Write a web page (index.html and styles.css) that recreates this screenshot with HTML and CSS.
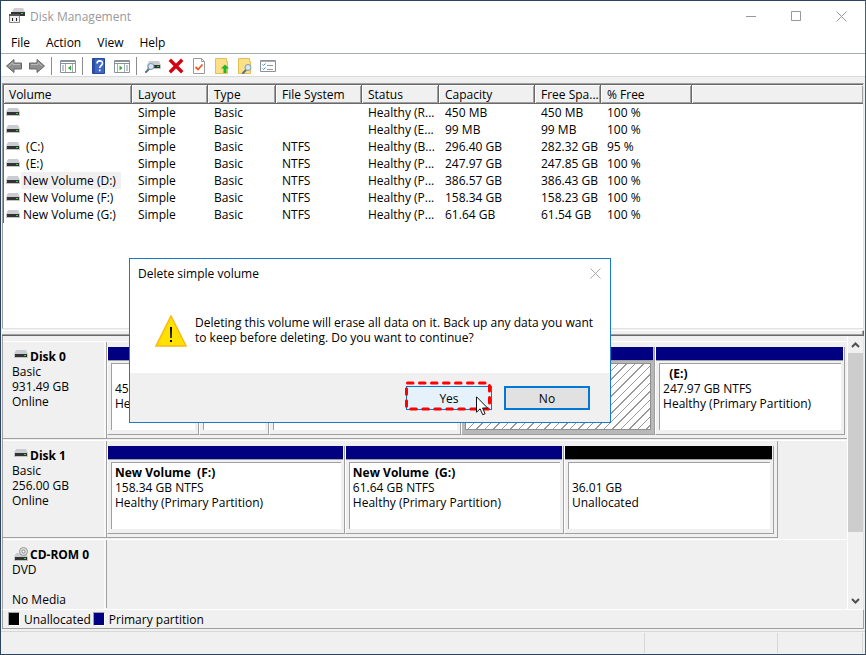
FILE: index.html
```html
<!DOCTYPE html>
<html lang="en">
<head>
    <meta charset="UTF-8">
    <meta name="viewport" content="width=device-width, initial-scale=1.0">
    <title>Disk Management</title>
    <link rel="stylesheet" href="styles.css">
</head>
<body>
    <!-- shared icons -->
    <svg class="sprite" aria-hidden="true">
        <symbol id="drive" viewBox="0 0 14 8">
            <path d="M2 0h10l2 4H0z" fill="#c9cdd1"/>
            <path d="M0 4h14v4H0z" fill="#c4c4c4"/>
            <path d="M1 4h12v3H1z" fill="#333"/>
            <path d="M10 5h2v1h-2z" fill="#2be02b"/>
        </symbol>
        <symbol id="arrow" viewBox="0 0 16 16">
            <path d="M.5 8 8 1.500V5h7.500v6H8v3.500z" fill="#8f8f8f" stroke="#666"/>
            <path d="M3 8l4-3.500V6.500h7" fill="none" stroke="#bbb"/>
        </symbol>
        <symbol id="glass" viewBox="0 0 10 10">
            <path d="M4 6 1 9" stroke="#5b6f83" stroke-width="2" stroke-linecap="round"/>
            <circle cx="6" cy="3.500" r="3" fill="#d3e7f7" stroke="#8096ab"/>
        </symbol>
    </svg>

    <div class="window">
        <header class="titlebar">
            <svg class="app-icon" width="16" height="16" viewBox="0 0 16 16">
                <path d="M5 0h9l2 4H3z" fill="#d0d0d0"/>
                <path d="M2 4h14v4H2z" fill="#333"/>
                <path d="M12 5h2v1h-2z" fill="#2be02b"/>
                <path d="M.5 7.500h10v7H.5z" fill="#eee" stroke="#888"/>
                <path d="M0 6h11v2H0z" fill="#555"/>
                <path d="M3 10h1v3H3zM7 10h1v3H7z" fill="#222"/>
            </svg>
            <h1>Disk Management</h1>
            <div class="window-buttons">
                <button type="button" aria-label="Minimize"><svg width="11" height="11"><path d="M0 5.500h10" stroke="#999"/></svg></button>
                <button type="button" aria-label="Maximize"><svg width="11" height="11"><path d="M.5.5h9v9h-9z" fill="none" stroke="#999"/></svg></button>
                <button type="button" aria-label="Close"><svg width="11" height="11"><path d="M.5.5l10 10M10.500.5l-10 10" stroke="#999"/></svg></button>
            </div>
        </header>

        <nav class="menu">
            <button type="button">File</button>
            <button type="button">Action</button>
            <button type="button">View</button>
            <button type="button">Help</button>
        </nav>

        <div class="toolbar">
            <button type="button" aria-label="Back"><svg width="16" height="16"><use href="#arrow"/></svg></button>
            <button type="button" aria-label="Forward"><svg width="16" height="16"><use href="#arrow" transform="matrix(-1 0 0 1 16 0)"/></svg></button>
            <span class="separator"></span>
            <button type="button" aria-label="Show console tree">
                <svg width="16" height="16" viewBox="0 0 16 16">
                    <path d="M.5 2.500h15v12H.5z" fill="#fff" stroke="#8b919b"/>
                    <path d="M1 3h14v1H1zM1 5h14v1H1z" fill="#8b919b"/>
                    <path d="M5.500 6v8M12.500 6v8" stroke="#a7adb5"/>
                    <path d="M2 8h2M2 10h2M2 12h2" stroke="#7f8fa8"/>
                    <path d="M11 7.500v5L8 10z" fill="#2eae2e"/>
                </svg>
            </button>
            <span class="separator"></span>
            <button type="button" aria-label="Help">
                <svg width="14" height="16" viewBox="0 0 14 16">
                    <path d="M.5.5h12v15H.5z" fill="#3f66c4" stroke="#27479a"/>
                    <path d="M1 1h2v14H1z" fill="#2b4fa8"/>
                    <path d="M5 5.500C5 2 10.500 2 10.500 5.200 10.500 7.500 7.700 7.600 7.700 10M7.700 11.500v1.800" fill="none" stroke="#fff" stroke-width="1.600"/>
                </svg>
            </button>
            <button type="button" aria-label="Show action pane">
                <svg width="16" height="16" viewBox="0 0 16 16">
                    <path d="M.5 2.500h15v12H.5z" fill="#fff" stroke="#8b919b"/>
                    <path d="M1 3h14v1H1zM1 5h14v1H1z" fill="#8b919b"/>
                    <path d="M3.500 6v8M10.500 6v8" stroke="#a7adb5"/>
                    <path d="M12 8h2M12 10h2M12 12h2" stroke="#7f8fa8"/>
                    <path d="M5.500 7.500v5l3-2.500z" fill="#2eae2e"/>
                </svg>
            </button>
            <span class="separator"></span>
            <button type="button" aria-label="Rescan disks">
                <svg width="16" height="16" viewBox="0 0 16 16">
                    <use href="#drive" x="2" y="3" width="14" height="8"/>
                    <use href="#glass" x="0" y="5" width="10" height="10"/>
                </svg>
            </button>
            <button type="button" aria-label="Delete volume">
                <svg width="16" height="16" viewBox="0 0 16 16">
                    <path d="M3 3l10 10M13 3L3 13" stroke="#d40012" stroke-width="3.400" stroke-linecap="square"/>
                </svg>
            </button>
            <button type="button" aria-label="Properties">
                <svg width="16" height="16" viewBox="0 0 16 16">
                    <path d="M2.500.5h8l3 3v12h-11z" fill="#fff" stroke="#9a9a9a"/>
                    <path d="M10.500.5v3h3" fill="none" stroke="#9a9a9a"/>
                    <path d="M4.500 9l2.500 2.500 4.500-5" fill="none" stroke="#ee5a24" stroke-width="1.800"/>
                </svg>
            </button>
            <button type="button" aria-label="Open folder">
                <svg width="16" height="16" viewBox="0 0 16 16">
                    <path d="M1.500.5h11v3h1v12h-12z" fill="#fbe08a" stroke="#e3bf56"/>
                    <path d="M11 6.500l4 4h-2.500V15h-3v-4.500H7z" fill="#22b422"/>
                </svg>
            </button>
            <button type="button" aria-label="Search folder">
                <svg width="16" height="16" viewBox="0 0 16 16">
                    <path d="M1.500.5h11v3h1v12h-12z" fill="#fbe08a" stroke="#e3bf56"/>
                    <use href="#glass" x="5" y="6" width="10" height="10"/>
                </svg>
            </button>
            <button type="button" aria-label="Options">
                <svg width="16" height="16" viewBox="0 0 16 16">
                    <path d="M.5 2.500h15v11H.5z" fill="#fff" stroke="#8b919b"/>
                    <path d="M1 3h14v1H1z" fill="#a9afb7"/>
                    <path d="M2.500 6.500l1 1 2-2M2.500 10.500l1 1 2-2" fill="none" stroke="#3c8be0"/>
                    <path d="M7 7.500h6M7 11.500h6" stroke="#999"/>
                </svg>
            </button>
        </div>

        <main class="content">
            <section class="volume-list">
                <table>
                    <colgroup>
                        <col class="col-volume">
                        <col class="col-layout">
                        <col class="col-type">
                        <col class="col-fs">
                        <col class="col-status">
                        <col class="col-capacity">
                        <col class="col-space">
                        <col class="col-free">
                        <col>
                    </colgroup>
                    <thead>
                        <tr><th>Volume</th><th>Layout</th><th>Type</th><th>File System</th><th>Status</th><th>Capacity</th><th>Free Spa...</th><th>% Free</th><th></th></tr>
                    </thead>
                    <tbody>
                        <tr><td><svg class="drive"><use href="#drive"/></svg></td><td>Simple</td><td>Basic</td><td></td><td>Healthy (R...</td><td>450 MB</td><td>450 MB</td><td>100 %</td><td></td></tr>
                        <tr><td><svg class="drive"><use href="#drive"/></svg></td><td>Simple</td><td>Basic</td><td></td><td>Healthy (E...</td><td>99 MB</td><td>99 MB</td><td>100 %</td><td></td></tr>
                        <tr><td><svg class="drive"><use href="#drive"/></svg><span class="name">&nbsp;(C:)</span></td><td>Simple</td><td>Basic</td><td>NTFS</td><td>Healthy (B...</td><td>296.40 GB</td><td>282.32 GB</td><td>95 %</td><td></td></tr>
                        <tr><td><svg class="drive"><use href="#drive"/></svg><span class="name">&nbsp;(E:)</span></td><td>Simple</td><td>Basic</td><td>NTFS</td><td>Healthy (P...</td><td>247.97 GB</td><td>247.85 GB</td><td>100 %</td><td></td></tr>
                        <tr><td><svg class="drive"><use href="#drive"/></svg><span class="name selected">New Volume (D:)</span></td><td>Simple</td><td>Basic</td><td>NTFS</td><td>Healthy (P...</td><td>386.57 GB</td><td>386.43 GB</td><td>100 %</td><td></td></tr>
                        <tr><td><svg class="drive"><use href="#drive"/></svg><span class="name">New Volume (F:)</span></td><td>Simple</td><td>Basic</td><td>NTFS</td><td>Healthy (P...</td><td>158.34 GB</td><td>158.23 GB</td><td>100 %</td><td></td></tr>
                        <tr><td><svg class="drive"><use href="#drive"/></svg><span class="name">New Volume (G:)</span></td><td>Simple</td><td>Basic</td><td>NTFS</td><td>Healthy (P...</td><td>61.64 GB</td><td>61.54 GB</td><td>100 %</td><td></td></tr>
                    </tbody>
                </table>
            </section>
            <div class="splitter"></div>

            <section class="disk-view">
                <div class="disks">
                    <article class="disk">
                        <div class="disk-label">
                            <h2><svg class="drive"><use href="#drive"/></svg>Disk 0</h2>
                            <p>Basic</p>
                            <p>931.49 GB</p>
                            <p>Online</p>
                        </div>
                        <div class="graph">
                            <div class="volume" style="flex-grow: 91"><div class="bar"></div><div class="info"><p>&nbsp;</p><p>450 MB</p><p>Healthy</p></div></div>
                            <div class="volume" style="flex-grow: 69"><div class="bar"></div><div class="info"></div></div>
                            <div class="volume" style="flex-grow: 192"><div class="bar"></div><div class="info"></div></div>
                            <div class="volume active" style="flex-grow: 194"><div class="bar"></div><div class="info"></div></div>
                            <div class="volume" style="flex-grow: 190"><div class="bar"></div><div class="info"><h3>&nbsp;&nbsp;(E:)</h3><p>247.97 GB NTFS</p><p>Healthy (Primary Partition)</p></div></div>
                        </div>
                    </article>
                    <article class="disk">
                        <div class="disk-label">
                            <h2><svg class="drive"><use href="#drive"/></svg>Disk 1</h2>
                            <p>Basic</p>
                            <p>256.00 GB</p>
                            <p>Online</p>
                        </div>
                        <div class="graph short">
                            <div class="volume" style="flex-grow: 238"><div class="bar"></div><div class="info"><h3>New Volume&nbsp; (F:)</h3><p>158.34 GB NTFS</p><p>Healthy (Primary Partition)</p></div></div>
                            <div class="volume" style="flex-grow: 219"><div class="bar"></div><div class="info"><h3>New Volume&nbsp; (G:)</h3><p>61.64 GB NTFS</p><p>Healthy (Primary Partition)</p></div></div>
                            <div class="volume unallocated" style="flex-grow: 210"><div class="bar"></div><div class="info"><p>&nbsp;</p><p>36.01 GB</p><p>Unallocated</p></div></div>
                        </div>
                    </article>
                    <article class="disk cdrom">
                        <div class="disk-label">
                            <h2>
                                <svg width="16" height="15" viewBox="0 0 16 15">
                                    <path d="M2 6h10l2 4H0z" fill="#c9cdd1"/>
                                    <circle cx="9.500" cy="4.500" r="4" fill="#ddd" stroke="#9a9a9a"/>
                                    <circle cx="9.500" cy="4.500" r="1.500" fill="#fff" stroke="#888"/>
                                    <path d="M0 10h14v4H0z" fill="#c4c4c4"/>
                                    <path d="M1 10h12v3H1z" fill="#333"/>
                                    <path d="M10 11h2v1h-2z" fill="#2be02b"/>
                                </svg>CD-ROM 0
                            </h2>
                            <p>DVD</p>
                            <p>&nbsp;</p>
                            <p>No Media</p>
                        </div>
                        <div class="graph empty"></div>
                    </article>
                </div>
                <div class="scrollbar">
                    <button type="button" aria-label="Scroll up"><svg width="9" height="6"><path d="M1 5l3.500-3.500L8 5" fill="none" stroke="#505050" stroke-width="2"/></svg></button>
                    <div class="track"><div class="thumb"></div></div>
                    <button type="button" aria-label="Scroll down"><svg width="9" height="6"><path d="M1 1l3.500 3.500L8 1" fill="none" stroke="#505050" stroke-width="2"/></svg></button>
                </div>
            </section>

            <div class="legend">
                <span class="swatch black"></span>Unallocated
                <span class="swatch navy"></span>Primary partition
            </div>
        </main>

        <footer class="statusbar"><span></span><span></span><span></span></footer>
    </div>

    <div class="dialog" role="dialog" aria-labelledby="dialog-title">
        <div class="dialog-header">
            <h2 id="dialog-title">Delete simple volume</h2>
            <button type="button" aria-label="Close"><svg width="11" height="11"><path d="M.5.5l10 10M10.500.5l-10 10" stroke="#aaa"/></svg></button>
        </div>
        <div class="dialog-body">
            <svg width="32" height="32" viewBox="0 0 32 32">
                <path d="M16 1l15 30H1z" fill="#ffe100" stroke="#fdb813" stroke-width="1.500"/>
                <path d="M15 12h2l-.3 11h-1.400zM15 25h2v2h-2z" fill="#000"/>
            </svg>
            <p>Deleting this volume will erase all data on it. Back up any data you want<br>to keep before deleting. Do you want to continue?</p>
        </div>
        <div class="dialog-footer">
            <button type="button" class="button yes">Yes</button>
            <button type="button" class="button no">No</button>
        </div>
        <svg class="highlight" width="88" height="30" viewBox="0 0 88 30">
            <rect x="2.500" y="2" width="83" height="26" rx="1" fill="none" stroke="#f00" stroke-width="3" stroke-dasharray="5.500 6.500" stroke-linecap="round"/>
        </svg>
        <svg class="cursor" width="13" height="20" viewBox="0 0 13 20">
            <path d="M.5.8v15.400l3.600-3.400 2.600 5.900 2.400-1-2.500-5.700h5z" fill="#fff" stroke="#111"/>
        </svg>
    </div>
</body>
</html>
```
FILE: styles.css
```css
* {
    box-sizing: border-box;
}
body {
    margin: 0;
    font: 12px/15px "Open Sans", "Noto Sans", sans-serif;
    color: #000;
    background-color: #fff;
}
h1, h2, h3, p {
    margin: 0;
    font-size: 12px;
    font-weight: normal;
}
button {
    padding: 0;
    border: none;
    background: none;
    font: inherit;
    color: inherit;
}
svg {
    display: block;
    flex: none;
}
.sprite {
    position: absolute;
    width: 0;
    height: 0;
}
.window {
    display: flex;
    flex-direction: column;
    min-height: 100vh;
    border: 1px solid #2b4560;
    border-right-color: #2f648c;
}

/* title bar, menu and toolbar */
.titlebar {
    display: flex;
    align-items: center;
    height: 30px;
    padding: 0 1px 0 8px;
    gap: 5px;
}
.titlebar h1 {
    flex: 1;
    color: #999;
}
.window-buttons {
    display: flex;
}
.window-buttons button {
    display: flex;
    align-items: center;
    justify-content: center;
    width: 45px;
    height: 30px;
}
.menu {
    display: flex;
    height: 23px;
    padding-left: 2px;
    border-bottom: 1px solid #a9adb5;
}
.menu button {
    padding: 0 8px;
}
.toolbar {
    display: flex;
    align-items: center;
    height: 23px;
    padding: 2px 0 0 1px;
    border-bottom: 1px solid #d9d9d9;
}
.toolbar button {
    display: flex;
    align-items: center;
    justify-content: center;
    width: 23px;
    height: 20px;
}
.separator {
    width: 8px;
    height: 18px;
    background: linear-gradient(#8c8c8c, #8c8c8c) 3px 0 / 1px 100% no-repeat;
}

/* volume list */
.content {
    display: flex;
    flex: 1;
    flex-direction: column;
    padding: 6px 1px 2px;
    background-color: #f0f0f0;
}
.volume-list {
    flex: 1;
    border: 1px solid #a0a0a0;
    border-right-color: #e3e3e3;
    border-bottom-color: #e3e3e3;
    background-color: #fff;
}
table {
    width: 100%;
    table-layout: fixed;
    border-collapse: separate;
    border-spacing: 0;
    border-top: 1px solid #696969;
    border-left: 1px solid #696969;
}
.col-volume { width: 128px; }
.col-layout { width: 76px; }
.col-type { width: 68px; }
.col-fs { width: 86px; }
.col-status { width: 77px; }
.col-capacity { width: 96px; }
.col-space { width: 66px; }
.col-free { width: 91px; }
th, td {
    padding: 0 0 0 6px;
    text-align: left;
    font-weight: normal;
    white-space: nowrap;
    overflow: hidden;
}
th {
    height: 19px;
    border-right: 1px solid #696969;
    border-bottom: 1px solid #696969;
    background-color: #f0f0f0;
    box-shadow: inset 1px 1px #fff, inset -1px -1px #a0a0a0;
}
th:last-child {
    border-right: none;
}
td {
    height: 17px;
    line-height: 17px;
}
th:first-child {
    padding-left: 5px;
}
td:first-child {
    padding-left: 2px;
}
.drive {
    display: inline-block;
    width: 14px;
    height: 8px;
    margin: 4px 1px 0 0;
    vertical-align: top;
}
.name {
    display: inline-block;
    padding: 0 5px 0 2px;
    vertical-align: top;
}
.selected {
    background-color: #f0f0f0;
}
.splitter {
    height: 6px;
    margin-top: 1px;
    border-top: 1px solid #fff;
    border-right: 1px solid #696969;
    border-bottom: 1px solid #696969;
    box-shadow: inset -1px -1px #a0a0a0;
}

/* graphical view */
.disk-view {
    display: flex;
    border-left: 1px solid #a0a0a0;
    border-right: 1px solid #e3e3e3;
}
.disks {
    flex: 1;
    padding-top: 5px;
}
.disk {
    display: flex;
    height: 99px;
    border-top: 1px solid #fff;
}
.disk-label {
    width: 103px;
    padding: 7px 0 0 9px;
    margin-bottom: 1px;
    border-bottom: 1px solid #a0a0a0;
    box-shadow: inset -2px 0 #f9f9f9;
}
.disk h2 {
    display: flex;
    align-items: flex-end;
    height: 15px;
    padding-left: 2px;
    font-weight: bold;
    white-space: nowrap;
}
.disk h2 .drive {
    align-self: flex-start;
    margin: 1px 2px 0 0;
}
.graph {
    display: flex;
    flex: 1;
    min-width: 0;
    margin-bottom: 1px;
    padding: 5px 2px 3px 0;
    border-left: 1px solid #a0a0a0;
    border-bottom: 1px solid #a0a0a0;
}
.graph.short {
    flex: 0 1 672px;
    padding-right: 3px;
    border-right: 1px solid #a0a0a0;
}
.cdrom {
    height: 70px;
}
.cdrom .disk-label {
    margin: 0;
    border-bottom: none;
}
.graph.empty {
    border-bottom: none;
}
.volume {
    display: flex;
    flex: 1 1 0;
    flex-direction: column;
    min-width: 0;
    border-left: 1px solid #fff;
    border-right: 1px solid #a0a0a0;
    border-bottom: 1px solid #a0a0a0;
}
.bar {
    height: 14px;
    margin-right: 1px;
    border-bottom: 1px solid #a0a0a0;
    background-color: #000080;
}
.unallocated .bar {
    background-color: #000;
}
.info {
    flex: 1;
    margin: 2px 3px 4px;
    padding: 2px 0 0 3px;
    border-top: 1px solid #a0a0a0;
    border-left: 1px solid #a0a0a0;
    background-color: #fff;
    white-space: nowrap;
    overflow: hidden;
}
.info h3 {
    font-weight: bold;
}
.active {
    background-color: #b8b8b8;
}
.active .info {
    border: 1px solid #909090;
    background: repeating-linear-gradient(135deg, #fff 0 5px, #999 5px 6px);
}
.scrollbar {
    display: flex;
    flex-direction: column;
    width: 16px;
    border-left: 1px solid #fff;
}
.scrollbar button {
    display: flex;
    align-items: center;
    justify-content: center;
    height: 17px;
}
.track {
    flex: 1;
}
.thumb {
    height: 75%;
    background-color: #cdcdcd;
}
.legend {
    display: flex;
    align-items: center;
    height: 20px;
    padding-left: 5px;
    border: 1px solid #a0a0a0;
    border-top-color: #fff;
}
.swatch {
    width: 12px;
    height: 14px;
    margin-right: 4px;
    border: 1px solid #fff;
    border-top-color: #a0a0a0;
    border-left-color: #a0a0a0;
}
.black {
    background-color: #000;
}
.navy {
    margin-left: 2px;
    background-color: #000080;
}
.statusbar {
    display: flex;
    height: 23px;
    padding: 1px 2px 1px 0;
    border-top: 1px solid #d7d7d7;
    background-color: #f0f0f0;
}
.statusbar span {
    border-right: 1px solid #d7d7d7;
    width: 133px;
}
.statusbar span:first-child {
    flex: 1;
}
.statusbar span:last-child {
    width: 85px;
}

/* confirmation dialog */
.dialog {
    position: absolute;
    left: 129px;
    top: 258px;
    width: 482px;
    border: 1px solid #1979ca;
    background-color: #fff;
}
.dialog-header {
    display: flex;
    align-items: center;
    justify-content: space-between;
    height: 29px;
    padding: 0 9px 0 8px;
}
.dialog-body {
    display: flex;
    gap: 8px;
    padding: 27px 0 26px 25px;
    white-space: nowrap;
}
.dialog-footer {
    display: flex;
    justify-content: flex-end;
    gap: 12px;
    padding: 13px 20px 12px;
    background-color: #f0f0f0;
}
.button {
    width: 86px;
    height: 24px;
    background-color: #e1e1e1;
}
.yes {
    border: 1px solid #0078d7;
    background-color: #e5f1fb;
}
.no {
    border: 2px solid #0078d7;
}
.highlight {
    position: absolute;
    right: 118px;
    bottom: 11px;
}
.cursor {
    position: absolute;
    right: 121px;
    bottom: 6px;
}
```
